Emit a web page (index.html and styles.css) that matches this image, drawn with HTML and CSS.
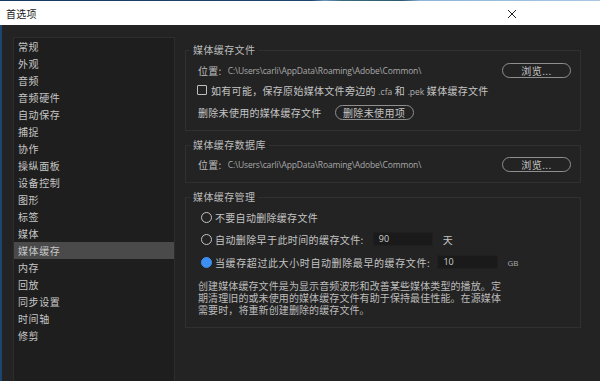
FILE: index.html
```html
<!DOCTYPE html>
<html lang="zh-CN">
<head>
<meta charset="utf-8">
<title>首选项</title>
<link rel="stylesheet" href="styles.css">
</head>
<body>
<div class="strip"></div>
<div class="titlebar">
  <span class="title">首选项</span>
  <svg class="close" width="10" height="10" viewBox="0 0 10 10"><path d="M1 1 L9 9 M9 1 L1 9" stroke="#222" stroke-width="1" fill="none"/></svg>
</div>
<div class="window">
  <ul class="sidebar">
    <li>常规</li>
    <li>外观</li>
    <li>音频</li>
    <li>音频硬件</li>
    <li>自动保存</li>
    <li>捕捉</li>
    <li>协作</li>
    <li>操纵面板</li>
    <li>设备控制</li>
    <li>图形</li>
    <li>标签</li>
    <li>媒体</li>
    <li class="sel">媒体缓存</li>
    <li>内存</li>
    <li>回放</li>
    <li>同步设置</li>
    <li>时间轴</li>
    <li>修剪</li>
  </ul>
  <div class="main">
    <fieldset class="group g1">
      <legend>媒体缓存文件</legend>
      <div class="row loc">
        <span class="lbl">位置:</span><span class="path">C:\Users\carli\AppData\Roaming\Adobe\Common\</span>
        <span class="btn browse">浏览...</span>
      </div>
      <div class="row chk">
        <span class="cb"></span><span>如有可能，保存原始媒体文件旁边的 <span class="lat">.cfa</span> 和 <span class="lat">.pek</span> 媒体缓存文件</span>
      </div>
      <div class="row del">
        <span>删除未使用的媒体缓存文件</span><span class="btn delbtn">删除未使用项</span>
      </div>
    </fieldset>
    <fieldset class="group g2">
      <legend>媒体缓存数据库</legend>
      <div class="row loc">
        <span class="lbl">位置:</span><span class="path">C:\Users\carli\AppData\Roaming\Adobe\Common\</span>
        <span class="btn browse">浏览...</span>
      </div>
    </fieldset>
    <fieldset class="group g3">
      <legend>媒体缓存管理</legend>
      <div class="row radio r1"><span class="rb"></span><span>不要自动删除缓存文件</span></div>
      <div class="row radio r2"><span class="rb"></span><span>自动删除早于此时间的缓存文件:</span><span class="field f1">90</span><span class="unit">天</span></div>
      <div class="row radio r3"><span class="rb on"></span><span>当缓存超过此大小时自动删除最早的缓存文件:</span><span class="field f2">10</span><span class="unit gb">GB</span></div>
      <p class="desc">创建媒体缓存文件是为显示音频波形和改善某些媒体类型的播放。定期清理旧的或未使用的媒体缓存文件有助于保持最佳性能。在源媒体需要时，将重新创建删除的缓存文件。</p>
    </fieldset>
  </div>
</div>
</body>
</html>
```
FILE: styles.css
```css
* { box-sizing: border-box; }
html, body { margin: 0; padding: 0; }
body {
  width: 600px;
  height: 381px;
  overflow: hidden;
  background: #232323;
  font-family: "Noto Sans CJK SC", "Noto Sans", sans-serif;
  font-size: 10px;
  color: #c4c4c4;
}
.strip {
  height: 1px;
  background: linear-gradient(to right, #163a60 0%, #1f4670 52%, #6f97bd 54%, #3a6a7e 57%, #2d5a70 67%, #8fb4d8 70%, #a9c7e3 100%);
}
.titlebar {
  height: 24px;
  background: #ffffff;
  display: flex;
  align-items: center;
  justify-content: space-between;
  padding: 0 83px 0 6px;
}
.title {
  font-size: 10px;
  color: #1a1a1a;
  letter-spacing: 0.2px;
}
.close { display: block; margin-top: 1px; }
.window {
  height: 356px;
  display: flex;
  align-items: flex-start;
  border-left: 2px solid #1d4571;
  overflow: hidden;
}
.sidebar {
  list-style: none;
  margin: 12px 0 0 11px;
  padding: 0;
  width: 162px;
  height: 400px;
  background: #1e1e1e;
  border: 1px solid #2d2d2d;
  flex: none;
}
.sidebar li {
  height: 17px;
  line-height: 17px;
  padding-left: 4px;
  letter-spacing: 0.6px;
  color: #c6c6c6;
}
.sidebar li.sel { background: #4a4a4a; }
.main {
  margin-left: 10px;
  width: 396px;
  flex: none;
  padding-top: 19px;
}
.group {
  margin: 0;
  border: 1px solid #303030;
  padding: 0 9px 0 12px;
  min-width: 0;
}
.group legend {
  margin-left: -8px;
  padding: 0 3px 0 3px;
  line-height: 12px;
  height: 12px;
  letter-spacing: 0.4px;
  color: #bcbcbc;
}
.row {
  display: flex;
  align-items: center;
  height: 16px;
  letter-spacing: 0.3px;
}
.g1 { padding-top: 6px; padding-bottom: 10px; }
.g1 .chk { margin-top: 4px; letter-spacing: 0.3px; }
.g1 .del { margin-top: 6px; }
.g2 { margin-top: 8px; padding-top: 5px; padding-bottom: 10px; }
.g3 { margin-top: 8px; padding-top: 6px; padding-bottom: 11px; }
.lbl { color: #bdbdbd; }
.lat {
  font-family: "Open Sans", "Noto Sans", sans-serif;
  font-size: 8.5px;
  letter-spacing: 0;
  color: #b0b0b0;
}
.path {
  margin-left: 6px;
  font-family: "Open Sans", "Noto Sans", sans-serif;
  font-size: 8.5px;
  letter-spacing: -0.15px;
  color: #a9a9a9;
  flex: 1;
}
.btn {
  display: flex;
  align-items: center;
  justify-content: center;
  height: 15px;
  border: 1px solid #8f8f8f;
  border-radius: 8px;
  color: #c4c4c4;
  letter-spacing: 0.4px;
}
.browse { width: 69px; }
.delbtn { width: 79px; margin-left: 13px; }
.cb {
  width: 10px;
  height: 10px;
  border: 1px solid #c0c0c0;
  border-radius: 1px;
  margin-right: 4px;
  margin-left: -1px;
}
.radio { padding-left: 3px; }
.g3 .r2 { margin-top: 6px; letter-spacing: 0.4px; }
.g3 .r3 { margin-top: 7px; letter-spacing: 0.6px; }
.rb {
  width: 11px;
  height: 11px;
  border: 1.5px solid #c4c4c4;
  border-radius: 50%;
  margin-right: 3px;
  flex: none;
}
.rb.on { background: #3c8ef0; border-color: #3c8ef0; }
.field {
  height: 14px;
  background: #1a1a1a;
  border: 1px solid #1f1f1f;
  font-family: "Open Sans", "Noto Sans", sans-serif;
  font-size: 9px;
  letter-spacing: 0;
  color: #cfcfcf;
  padding-left: 5px;
  line-height: 12px;
}
.f1 { width: 60px; margin-left: 9px; }
.f2 { width: 61px; margin-left: 7px; }
.unit { margin-left: 10px; }
.unit.gb {
  margin-left: 9px;
  font-family: "Open Sans", "Noto Sans", sans-serif;
  font-size: 8px;
  letter-spacing: 0;
  color: #a9a9a9;
}
.desc {
  margin: 10px 0 0 0;
  width: 310px;
  line-height: 12px;
  letter-spacing: 0.1px;
  color: #bcbcbc;
}
```
